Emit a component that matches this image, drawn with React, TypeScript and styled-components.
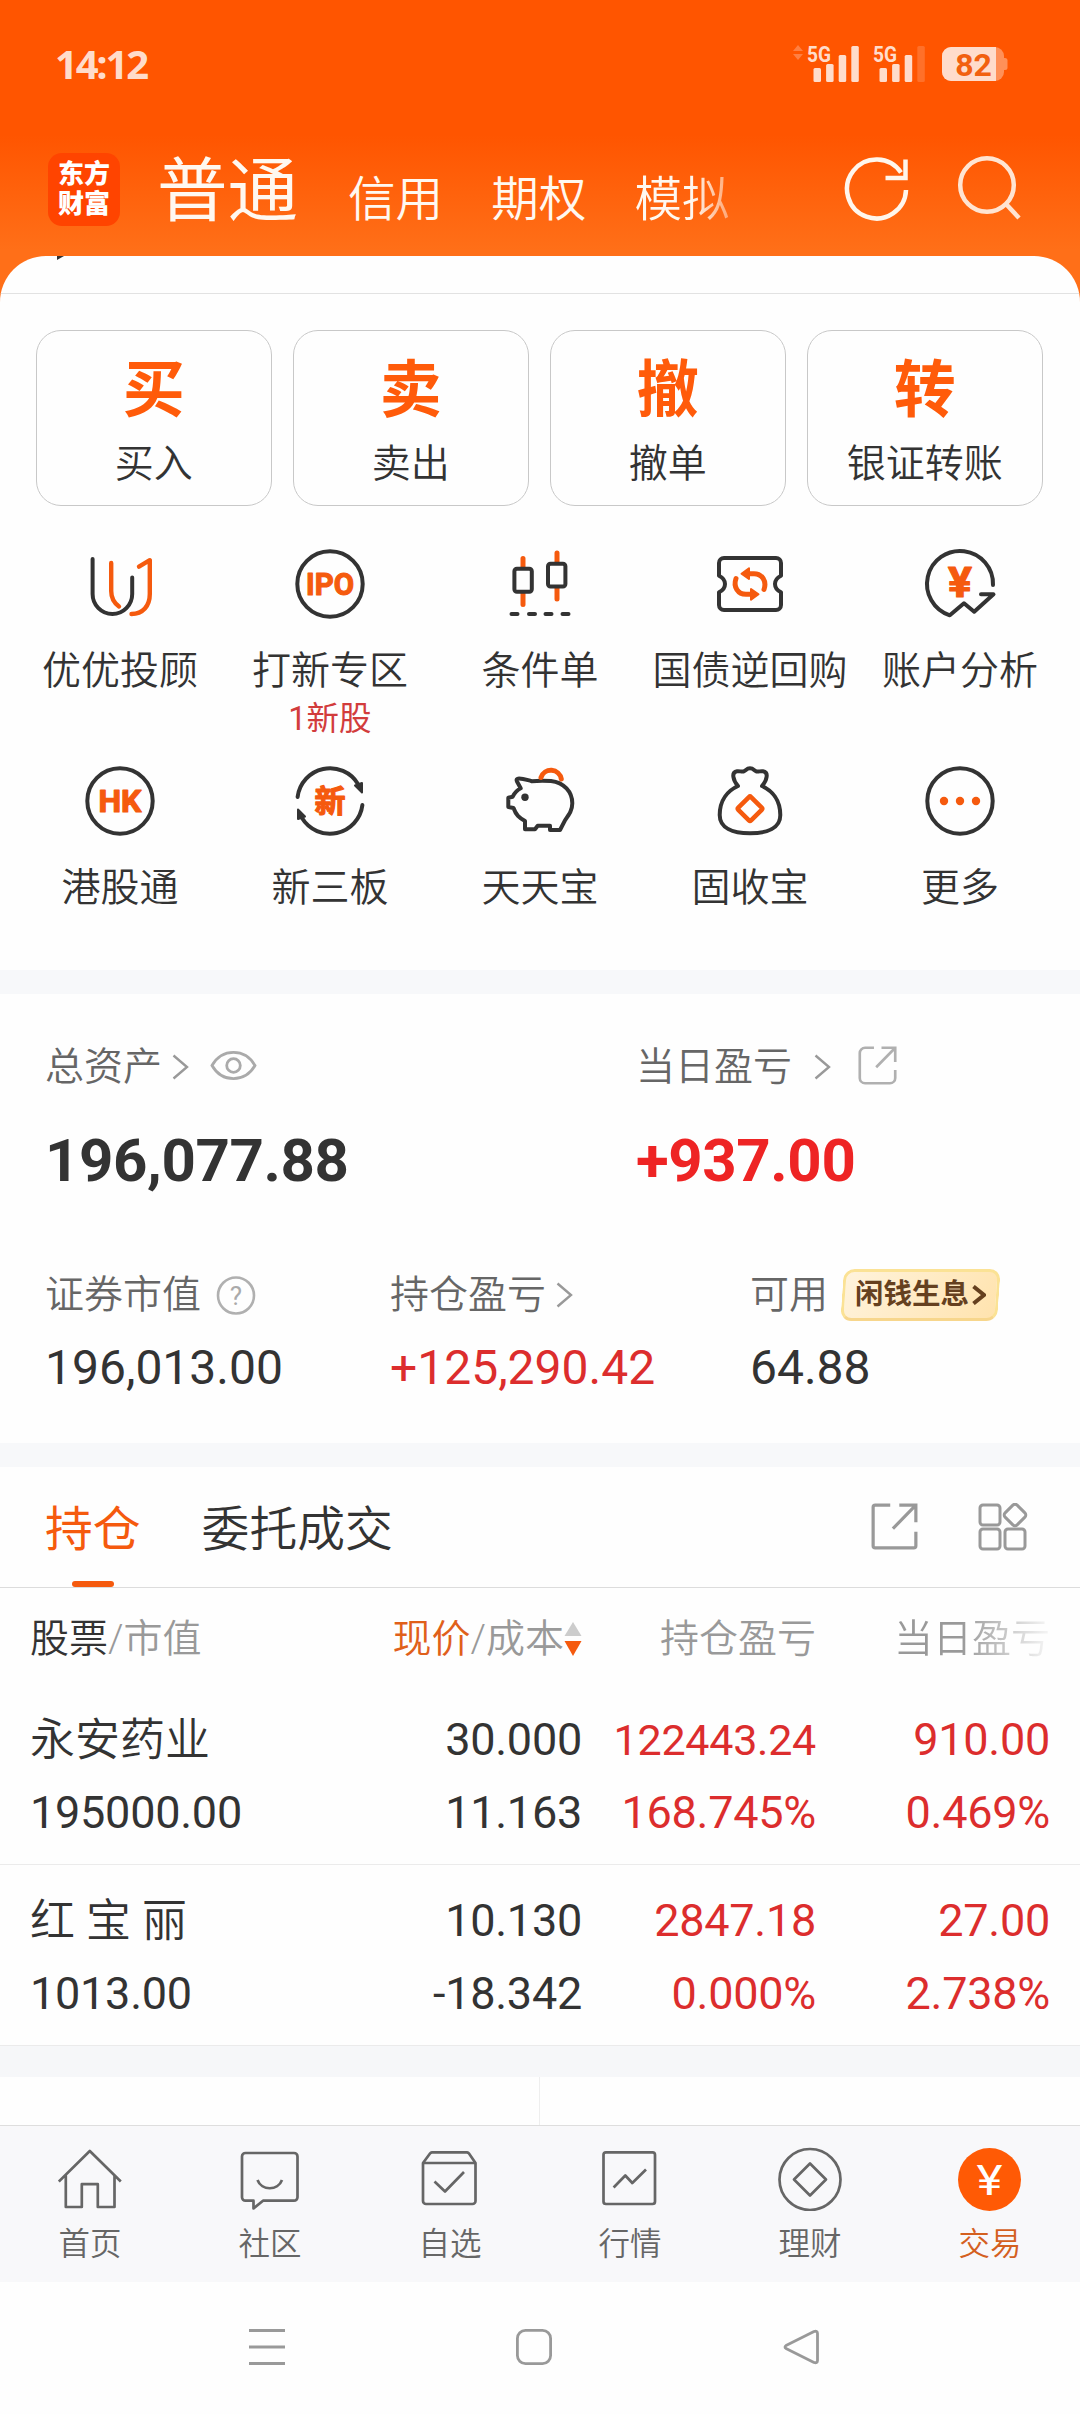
import React from "react";
import styled, { createGlobalStyle } from "styled-components";

const ORANGE = "#f55a0e";
const INK = "#333";
const RED = "#dc2d2d";

const GlobalStyle = createGlobalStyle`
  * { box-sizing: border-box; }
  body {
    margin: 0;
    background: #fff;
    font-family: Roboto, "Noto Sans CJK SC", sans-serif;
    font-weight: 350;
    color: ${INK};
  }
  svg { display: block; flex: none; }
`;

const Screen = styled.div`
  width: 1080px;
  height: 2414px;
  display: flex;
  flex-direction: column;
  overflow: hidden;
  background: #fefefe;
`;

/* ---------- Header ---------- */

const Header = styled.header`
  flex: none;
  height: 306px;
  margin-bottom: -50px;
  background: linear-gradient(#ff5500 0, #ff5500 135px, #ff6f18 250px, #ff6f18 100%);
`;

const StatusBar = styled.div`
  height: 128px;
  padding: 0 72px 0 55px;
  display: flex;
  justify-content: space-between;
  align-items: center;
`;

const Clock = styled.span`
  font: 700 40px/44px "Open Sans", Roboto, sans-serif;
  letter-spacing: -2.2px;
  color: #ffdccb;
`;

const NavRow = styled.div`
  height: 122px;
  padding: 0 57px 0 48px;
  display: flex;
  align-items: center;
`;

const Logo = styled.div`
  width: 72px;
  height: 73px;
  border-radius: 14px;
  background: #ff4400;
  color: #fff;
  display: grid;
  place-content: center;
  font-size: 26px;
  font-weight: 900;
  line-height: 30px;
  text-align: center;
`;

const ModeTabs = styled.nav`
  display: flex;
  align-items: baseline;
  gap: 48px;
  margin-left: 37px;
  padding-top: 14px;
  flex: 1;
  color: #fff8f0;
  line-height: 80px;
`;

const ModeTab = styled.span<{ $active?: boolean; $fade?: boolean }>`
  font-size: ${(p) => (p.$active ? 70.5 : 47.6)}px;
  margin-right: ${(p) => (p.$active ? 2 : 0)}px;
  font-weight: ${(p) => (p.$active ? 400 : 350)};
  ${(p) =>
    p.$fade &&
    "background: linear-gradient(90deg, #fff8f0 60%, #ffa470 100%); background-clip: text; color: transparent;"}
`;

const HeaderActions = styled.div`
  display: flex;
  align-items: center;
  gap: 47px;
`;

/* ---------- Sheet ---------- */

const Sheet = styled.section`
  flex: none;
  height: 714px;
  border-radius: 46px 46px 0 0;
  background: #fefefe;
  overflow: hidden;
`;

const ClippedRow = styled.div`
  height: 38px;
  padding-left: 57px;
  border-bottom: 1.5px solid #e2e2e2;
`;

const Actions = styled.div`
  display: grid;
  grid-template-columns: repeat(4, 235.5px);
  gap: 21.5px;
  padding: 36px 36px 0;
`;

const ActionCard = styled.button`
  all: unset;
  box-sizing: border-box;
  height: 176px;
  border: 1px solid #c8c8c8;
  border-radius: 25px;
  display: flex;
  flex-direction: column;
  align-items: center;
`;

const ActionGlyph = styled.span`
  margin-top: 25px;
  font-size: 62px;
  font-weight: 700;
  line-height: 70px;
  color: #ff5b0a;
`;

const ActionLabel = styled.span`
  margin-top: 14px;
  font-size: 39px;
  line-height: 48px;
`;

const Features = styled.div`
  display: grid;
  grid-template-columns: repeat(5, 210px);
  grid-auto-rows: 217px;
  padding: 36px 15px 0;
`;

const Feature = styled.div`
  display: flex;
  flex-direction: column;
  align-items: center;
  white-space: nowrap;
`;

const FeatureLabel = styled.span`
  margin-top: 21px;
  font-size: 39px;
  line-height: 48px;
`;

const FeatureNote = styled.span`
  margin-top: 4px;
  font-size: 32.5px;
  font-weight: 400;
  line-height: 40px;
  color: #d23c3c;
`;

const Divider = styled.div`
  flex: none;
  height: 24px;
  background: #f7f8fa;
`;

/* ---------- Assets ---------- */

const Assets = styled.section`
  flex: none;
  height: 449px;
  padding: 48px 45px 0;
`;

const TotalGrid = styled.div`
  display: grid;
  grid-template-columns: 591px 1fr;
`;

const DetailGrid = styled.div`
  display: grid;
  grid-template-columns: 345px 360px 1fr;
  margin-top: 74px;
`;

const LabelLine = styled.div<{ $gap?: number }>`
  height: 50px;
  display: flex;
  align-items: center;
  gap: ${(p) => p.$gap ?? 10}px;
  font-size: 39px;
  line-height: 50px;
  color: #666;
  white-space: nowrap;
`;

const EyeIcon = styled.svg`
  margin-left: 11px;
  margin-top: -3px;
`;

const ShareSlot = styled.span`
  margin: -3px 0 0 5px;
`;

const TotalValue = styled.div<{ $up?: boolean }>`
  margin-top: 34px;
  font-size: 60px;
  font-weight: 700;
  line-height: 70px;
  letter-spacing: -0.4px;
  color: ${(p) => (p.$up ? "#ee2424" : INK)};
`;

const DetailValue = styled.div<{ $up?: boolean }>`
  margin-top: 18px;
  font-size: 48px;
  font-weight: 400;
  line-height: 60px;
  color: ${(p) => (p.$up ? RED : INK)};
`;

const GoldTag = styled.span`
  position: relative;
  z-index: 0;
  width: 157px;
  height: 52px;
  margin-left: 4px;
  display: flex;
  align-items: center;
  justify-content: center;
  gap: 3px;
  font-size: 28.5px;
  font-weight: 700;
  line-height: 52px;
  color: #65401f;
  &::before {
    content: "";
    position: absolute;
    z-index: -1;
    inset: 0;
    transform: skewX(-4deg);
    border: 3px solid #fbe295;
    border-bottom-color: #f7d68c;
    border-radius: 11px;
    background: linear-gradient(120deg, #fff3dc, #ffe3ae);
  }
`;

/* ---------- Holdings ---------- */

const TabRow = styled.div`
  flex: none;
  height: 121px;
  padding: 0 52px 0 45px;
  display: flex;
  gap: 61px;
  border-bottom: 1.5px solid #dcdcdc;
`;

const Tab = styled.div<{ $active?: boolean }>`
  display: flex;
  flex-direction: column;
  align-items: center;
  font-size: 47.8px;
  line-height: 60px;
  padding-top: 33px;
  font-weight: ${(p) => (p.$active ? 400 : 350)};
  color: ${(p) => (p.$active ? ORANGE : INK)};
  &::after {
    content: "";
    width: 42px;
    height: 6px;
    margin-top: 21px;
    border-radius: 3px;
    background: ${(p) => (p.$active ? ORANGE : "transparent")};
  }
`;

const TabTools = styled.div`
  margin-left: auto;
  display: flex;
  gap: 60px;
  padding-top: 36px;
`;

const tableColumns = `
  display: grid;
  grid-template-columns: 282px 270px 234px 234px;
  padding: 0 30px 0 30px;
`;

const TableHead = styled.div`
  ${tableColumns}
  flex: none;
  height: 96px;
  align-items: center;
  padding-top: 5px;
  font-size: 39px;
  line-height: 50px;
  color: #999;
  white-space: nowrap;
`;

const HeadCell = styled.span<{ $end?: boolean; $fade?: boolean }>`
  display: flex;
  align-items: center;
  justify-content: ${(p) => (p.$end ? "flex-end" : "flex-start")};
  ${(p) =>
    p.$fade &&
    "background: linear-gradient(90deg, #999 62%, #f2f2f2 98%); background-clip: text; color: transparent;"}
`;

const Em = styled.span<{ $color: string }>`
  color: ${(p) => p.$color};
`;

const Row = styled.div`
  ${tableColumns}
  flex: none;
  height: 181px;
  padding-top: 23px;
  align-content: start;
  border-bottom: 1.5px solid #ebebeb;
  grid-auto-rows: 73px;
  font-size: 45px;
  line-height: 66px;
  letter-spacing: -0.25px;
  white-space: nowrap;
`;

const Cell = styled.span<{ $up?: boolean; $end?: boolean; $name?: boolean; $tight?: boolean }>`
  text-align: ${(p) => (p.$end ? "right" : "left")};
  color: ${(p) => (p.$up ? RED : INK)};
  font-weight: ${(p) => (p.$name ? 350 : 400)};
  ${(p) => p.$name && "padding-top: 1px; letter-spacing: 0;"}
  ${(p) => p.$tight && "font-size: 43px;"}
`;

const MoreGap = styled.div`
  flex: none;
  height: 31px;
  background: #f6f7f9;
`;

const SplitRow = styled.div`
  flex: none;
  height: 49px;
  display: grid;
  grid-template-columns: 1fr 1fr;
  border-bottom: 1.5px solid #dedede;
`;

const SplitCell = styled.div`
  border-right: 1px solid #eee;
`;

/* ---------- Bottom bars ---------- */

const TabBar = styled.nav`
  flex: none;
  height: 156px;
  display: grid;
  grid-template-columns: repeat(6, 1fr);
  background: #f8f8fa;
`;

const TabBarItem = styled.div<{ $active?: boolean }>`
  display: flex;
  flex-direction: column;
  align-items: center;
  padding-top: 21px;
  font-size: 31.5px;
  line-height: 40px;
  gap: 14px;
  color: ${(p) => (p.$active ? "#d4601f" : "#666")};
`;

const SystemNav = styled.div`
  flex: 1;
  display: flex;
  justify-content: space-between;
  align-items: center;
  padding: 0 261px 2px 249px;
`;

/* ---------- Icons ---------- */

const Chevron = ({ color = "#999", w = 17, h = 26, stroke = 2.4 }) => (
  <svg width={w} height={h} viewBox={`0 0 ${w} ${h}`} fill="none" stroke={color} strokeWidth={stroke}>
    <path d={`M1.5 1.5L${w - 2} ${h / 2}L1.5 ${h - 1.5}`} />
  </svg>
);

const FeatureIcon = ({ children }: { children: React.ReactNode }) => (
  <svg width="84" height="84" viewBox="0 0 84 84" fill="none" stroke={INK} strokeWidth="4" strokeLinecap="round" strokeLinejoin="round">
    {children}
  </svg>
);

const BadgeText = ({
  text,
  y,
  size,
  width,
  weight = 700,
}: {
  text: string;
  y: number;
  size: number;
  width: number;
  weight?: number;
}) => (
  <text
    x={42}
    y={y}
    fontSize={size}
    fontWeight={weight}
    textAnchor="middle"
    textLength={width}
    lengthAdjust="spacingAndGlyphs"
    fill={ORANGE}
    stroke={ORANGE}
    strokeWidth="1.2"
  >
    {text}
  </text>
);

const icons = {
  advisor: (
    <FeatureIcon>
      <path d="M14.6 17V52a19.8 20 0 0 0 39.6 0V35.5" />
      <g stroke={ORANGE} strokeWidth="4.4">
        <path d="M33.2 21V49c0 8 3 12 7.8 15.5" />
        <path d="M61 24.7L71.8 18.2V52c0 12-7 20-18.3 20" />
      </g>
    </FeatureIcon>
  ),
  ipo: (
    <FeatureIcon>
      <circle cx="42" cy="42" r="32.7" />
      <BadgeText text="IPO" y={53} size={32} width={48} />
    </FeatureIcon>
  ),
  candles: (
    <FeatureIcon>
      <path stroke={ORANGE} strokeWidth="5" d="M25 16.5v46M59 11v46" />
      <rect x="16.4" y="26.7" width="17.4" height="23" rx="2.5" fill="#fefefe" />
      <rect x="50" y="21.7" width="17.4" height="22.8" rx="2.5" fill="#fefefe" />
      <path d="M13.5 72h6M31 72h6M47.5 72h6M64.5 72h6" />
    </FeatureIcon>
  ),
  bond: (
    <FeatureIcon>
      <path d="M11 33.7V21a5 5 0 0 1 5-5H68a5 5 0 0 1 5 5V33.7c-8 4-8 12.6 0 16.6V63a5 5 0 0 1-5 5H16a5 5 0 0 1-5-5V50.3c8-4 8-12.6 0-16.6z" />
      {[0, 180].map((angle) => (
        <g key={angle} stroke={ORANGE} transform={`rotate(${angle} 42 42)`}>
          <path strokeWidth="5" d="M28 36.5C25 45 30 52.3 38 52.3H43" />
          <path strokeWidth="2" fill={ORANGE} d="M43 47v10.8l7.5-5.5z" />
        </g>
      ))}
    </FeatureIcon>
  ),
  analysis: (
    <FeatureIcon>
      <path d="M75 43A33 33 0 1 0 31.8 73.3L46 61.3l10.2 8.4L75.5 52.3H63" />
      <BadgeText text="¥" y={54.5} size={43} width={24} weight={700} />
    </FeatureIcon>
  ),
  hk: (
    <FeatureIcon>
      <circle cx="42" cy="42" r="32.7" />
      <BadgeText text="HK" y={53} size={31} width={43} />
    </FeatureIcon>
  ),
  newBoard: (
    <FeatureIcon>
      {[0, 180].map((angle) => (
        <g key={angle} transform={`rotate(${angle} 42 42)`}>
          <path d="M9.6 38A32.7 32.7 0 0 1 70 25" />
          <path fill={INK} strokeWidth="2" d="M67 26.5L74 24V33.500z" />
        </g>
      ))}
      <BadgeText text="新" y={53} size={31} width={31} />
    </FeatureIcon>
  ),
  piggy: (
    <FeatureIcon>
      <path d="M22.7 29.3L19 22.5c-1-2 0-3 2-3 5 0 8 1.5 12.7 2.7C40 21.5 47 21.5 53 22c13 1.5 21.3 11 21.3 22.3 0 7-3 11-7.3 17L62 71H52V66.7H39.7L37 70.3H27V62c-6-3.5-9-6-11.5-13l-5.2-1V38.7l4.4-1c2-4 4-6.4 8-8.4z" />
      <circle cx="27" cy="38.3" r="3.7" fill={INK} stroke="none" />
      <path stroke={ORANGE} strokeWidth="5" d="M43 18.5a10.5 10.5 0 0 1 20.3 1.5" />
    </FeatureIcon>
  ),
  bag: (
    <FeatureIcon>
      <path d="M30 27C20 31.5 11.7 41 11.7 56c0 13 13 18.3 30.3 18.3S72.3 69 72.3 56C72.3 41 64 31.5 54 27c5-6 7-14 1-14.8-3-.4-4 .8-6.5.3C46.5 12 45.5 9.3 42 9.3S37.5 12 35.5 12.5c-2.5.5-3.5-.7-6.5-.3-6 .8-4 8.8 1 14.8z" />
      <rect x="33" y="40.7" width="18" height="18" rx="1.5" transform="rotate(45 42 49.7)" stroke={ORANGE} strokeWidth="4.6" />
    </FeatureIcon>
  ),
  more: (
    <FeatureIcon>
      <circle cx="42" cy="42" r="32.7" />
      <g fill={ORANGE} stroke="none">
        <circle cx="26" cy="42" r="4.2" />
        <circle cx="42" cy="42" r="4.2" />
        <circle cx="58" cy="42" r="4.2" />
      </g>
    </FeatureIcon>
  ),
};

const BarIcon = ({ children }: { children: React.ReactNode }) => (
  <svg width="64" height="64" viewBox="0 0 64 64" fill="none" stroke="#666" strokeWidth="2.7" strokeLinejoin="round">
    {children}
  </svg>
);

const barIcons = {
  home: (
    <BarIcon>
      <path d="M.8 34.5L31.8 4l31 30.5M7.8 28.5V60H23.8V37.2H39.8V60H56.5V28.5" />
    </BarIcon>
  ),
  community: (
    <BarIcon>
      <path d="M25 53.7H56a3.5 3.5 0 0 0 3.5-3.5V9.5A3.5 3.5 0 0 0 56 6H7.500A3.5 3.5 0 0 0 4 9.5V50.2a3.5 3.5 0 0 0 3.5 3.5h8V61.5z" />
      <path d="M19.5 33c4 11 20.5 11 24.5 0" />
    </BarIcon>
  ),
  favorite: (
    <BarIcon>
      <path d="M5 16V54a3 3 0 0 0 3 3H54.5a3 3 0 0 0 3-3V16L51 6.5a3 3 0 0 0-2-1.2H14a3 3 0 0 0-2 1.2z" />
      <path d="M5 16H57.5M16.5 34.5L27 44.5 46 25" />
    </BarIcon>
  ),
  market: (
    <BarIcon>
      <rect x="5.5" y="5.3" width="51.5" height="51.7" rx="2.5" />
      <path d="M15.6 40.5L27.3 28.5l7 7.5L48 22.5" />
    </BarIcon>
  ),
  wealth: (
    <BarIcon>
      <circle cx="32" cy="32.5" r="30.5" />
      <path d="M32 16.5l16 16-16 16-16-16z" />
    </BarIcon>
  ),
  trade: (
    <BarIcon>
      <circle cx="31.5" cy="32.5" r="31.5" fill="#ff5a05" stroke="none" />
      <text x="31.5" y="48" fontSize="42" fontWeight="400" textAnchor="middle" textLength="26" lengthAdjust="spacingAndGlyphs" fill="#fff" stroke="none">
        ¥
      </text>
    </BarIcon>
  ),
};

const ShareIcon = ({ size, color, radius }: { size: number; color: string; radius: number }) => (
  <svg width={size} height={size} viewBox="0 0 44 44" fill="none" stroke={color} strokeWidth="3">
    <path
      d={`M18 2H${2 + radius}a${radius} ${radius} 0 0 0-${radius} ${radius}V${42 - radius}a${radius} ${radius} 0 0 0 ${radius} ${radius}H${42 - radius}a${radius} ${radius} 0 0 0 ${radius}-${radius}V27`}
    />
    <path d="M26.5 2H42V18M41.5 2.5L20.5 24" />
  </svg>
);

const GridIcon = () => (
  <svg width="50" height="48" viewBox="0 0 50 48" fill="none" stroke="#999" strokeWidth="3">
    <rect x="2" y="2" width="20" height="20" rx="3" />
    <rect x="2" y="26" width="20" height="20" rx="3" />
    <rect x="27" y="26" width="20" height="20" rx="3" />
    <rect x="28.5" y="3.5" width="17" height="17" rx="3" transform="rotate(45 37 12)" />
  </svg>
);

const Signal = ({ bars }: { bars: number }) => (
  <svg width="54" height="54" viewBox="-2 -8 54 54" fill="#ffdccb">
    <text x="-1" y="16.5" fontSize="22" fontWeight="700" textLength="24" lengthAdjust="spacingAndGlyphs">
      5G
    </text>
    {[14, 18, 27, 36].map((h, i) => (
      <rect key={h} x={5.5 + i * 12.6} y={37 - h} width="7.5" height={h} rx="1.5" opacity={i < bars ? 1 : 0.2} />
    ))}
  </svg>
);

const StatusIcons = styled.div`
  display: flex;
  align-items: center;
  gap: 12px;
`;

const LinkArrows = styled.svg`
  margin-right: -9px;
  margin-bottom: 22px;
`;

const Battery = styled.svg`
  margin-left: 3px;
`;

/* ---------- Data ---------- */

const actions = [
  ["买", "买入"],
  ["卖", "卖出"],
  ["撤", "撤单"],
  ["转", "银证转账"],
];

const features: { icon: keyof typeof icons; label: string; note?: string }[] = [
  { icon: "advisor", label: "优优投顾" },
  { icon: "ipo", label: "打新专区", note: "1新股" },
  { icon: "candles", label: "条件单" },
  { icon: "bond", label: "国债逆回购" },
  { icon: "analysis", label: "账户分析" },
  { icon: "hk", label: "港股通" },
  { icon: "newBoard", label: "新三板" },
  { icon: "piggy", label: "天天宝" },
  { icon: "bag", label: "固收宝" },
  { icon: "more", label: "更多" },
];

const holdings = [
  { name: "永安药业", value: "195000.00", price: "30.000", cost: "11.163", pnl: "122443.24", pnlPct: "168.745%", day: "910.00", dayPct: "0.469%" },
  { name: "红 宝 丽", value: "1013.00", price: "10.130", cost: "-18.342", pnl: "2847.18", pnlPct: "0.000%", day: "27.00", dayPct: "2.738%" },
];

const barItems: { icon: keyof typeof barIcons; label: string; active?: boolean }[] = [
  { icon: "home", label: "首页" },
  { icon: "community", label: "社区" },
  { icon: "favorite", label: "自选" },
  { icon: "market", label: "行情" },
  { icon: "wealth", label: "理财" },
  { icon: "trade", label: "交易", active: true },
];

export default function App() {
  return (
    <>
      <GlobalStyle />
      <Screen>
        <Header>
          <StatusBar>
            <Clock>14:12</Clock>
            <StatusIcons>
              <LinkArrows width="10" height="16" viewBox="0 0 10 16" fill="#ff7f42">
                <path d="M0 6L5 0l5 6zM0 9h10l-5 6z" />
              </LinkArrows>
              <Signal bars={4} />
              <Signal bars={3} />
              <Battery width="67" height="36" viewBox="0 0 67 36">
                <rect x="1" y="1" width="62" height="34" rx="9" fill="#ff9058" />
                <path d="M63 12h1a2.5 2.5 0 0 1 2.5 2.5v7A2.5 2.5 0 0 1 64 24h-1z" fill="#ff9058" />
                <path d="M55 1H10a9 9 0 0 0-9 9v16a9 9 0 0 0 9 9H55z" fill="#ffdccb" />
                <text x="32.5" y="29.5" fontSize="32" fontWeight="700" textAnchor="middle" fill="#f2600f">
                  82
                </text>
              </Battery>
            </StatusIcons>
          </StatusBar>
          <NavRow>
            <Logo>
              东方
              <br />
              财富
            </Logo>
            <ModeTabs>
              <ModeTab $active>普通</ModeTab>
              <ModeTab>信用</ModeTab>
              <ModeTab>期权</ModeTab>
              <ModeTab $fade>模拟</ModeTab>
            </ModeTabs>
            <HeaderActions>
              <svg width="66" height="66" viewBox="0 0 66 66" fill="none" stroke="#fff6ec" strokeWidth="4.5">
                <path d="M62 34A29.5 29.5 0 1 1 57 16.5M61.5 3.5V22H41.5" />
              </svg>
              <svg width="66" height="70" viewBox="0 0 66 70" fill="none" stroke="#ffe4d2" strokeWidth="4.5">
                <circle cx="30" cy="31" r="26.8" />
                <path d="M49 50L62 64" />
              </svg>
            </HeaderActions>
          </NavRow>
        </Header>

        <Sheet>
          <ClippedRow>
            <svg width="7" height="4" viewBox="0 0 7 4" fill={INK}>
              <path d="M0 0h7L0 4z" />
            </svg>
          </ClippedRow>
          <Actions>
            {actions.map(([glyph, label]) => (
              <ActionCard key={glyph}>
                <ActionGlyph>{glyph}</ActionGlyph>
                <ActionLabel>{label}</ActionLabel>
              </ActionCard>
            ))}
          </Actions>
          <Features>
            {features.map((f) => (
              <Feature key={f.label}>
                {icons[f.icon]}
                <FeatureLabel>{f.label}</FeatureLabel>
                {f.note && <FeatureNote>{f.note}</FeatureNote>}
              </Feature>
            ))}
          </Features>
        </Sheet>
        <Divider />

        <Assets>
          <TotalGrid>
            <div>
              <LabelLine>
                总资产
                <Chevron />
                <EyeIcon width="47" height="32" viewBox="0 0 47 32" fill="none" stroke="#aaa" strokeWidth="2.8">
                  <path d="M2 15.5C12-2 35-2 45 15.5 35 33 12 33 2 15.5z" />
                  <circle cx="23.5" cy="15.5" r="6.8" />
                </EyeIcon>
              </LabelLine>
              <TotalValue>196,077.88</TotalValue>
            </div>
            <div>
              <LabelLine $gap={22}>
                当日盈亏
                <Chevron />
                <ShareSlot>
                  <ShareIcon size={39} color="#b0b0b0" radius={6} />
                </ShareSlot>
              </LabelLine>
              <TotalValue $up>+937.00</TotalValue>
            </div>
          </TotalGrid>
          <DetailGrid>
            <div>
              <LabelLine $gap={15}>
                证券市值
                <svg width="40" height="40" viewBox="0 0 40 40" fill="none" stroke="#b0b0b0" strokeWidth="2.6">
                  <circle cx="20" cy="20.5" r="18" />
                  <text x="20" y="30" fontSize="26" fontWeight="400" textAnchor="middle" fill="#aaa" stroke="none">
                    ?
                  </text>
                </svg>
              </LabelLine>
              <DetailValue>196,013.00</DetailValue>
            </div>
            <div>
              <LabelLine>
                持仓盈亏
                <Chevron />
              </LabelLine>
              <DetailValue $up>+125,290.42</DetailValue>
            </div>
            <div>
              <LabelLine>
                可用
                <GoldTag>
                  闲钱生息
                  <Chevron color="#65401f" w={14} h={20} stroke={4} />
                </GoldTag>
              </LabelLine>
              <DetailValue>64.88</DetailValue>
            </div>
          </DetailGrid>
        </Assets>
        <Divider />

        <TabRow>
          <Tab $active>持仓</Tab>
          <Tab>委托成交</Tab>
          <TabTools>
            <ShareIcon size={47} color="#999" radius={2} />
            <GridIcon />
          </TabTools>
        </TabRow>
        <TableHead>
          <HeadCell>
            <Em $color={INK}>股票</Em>/市值
          </HeadCell>
          <HeadCell $end>
            <Em $color="#e0601a">现价</Em>/成本
            <svg width="18" height="36" viewBox="0 0 18 36">
              <path d="M9 1l8.5 14H.5z" fill="#ccc" />
              <path d="M.5 20h17L9 35z" fill={ORANGE} />
            </svg>
          </HeadCell>
          <HeadCell $end>持仓盈亏</HeadCell>
          <HeadCell $end $fade>
            当日盈亏
          </HeadCell>
        </TableHead>
        {holdings.map((h) => (
          <Row key={h.name}>
            <Cell $name>{h.name}</Cell>
            <Cell $end>{h.price}</Cell>
            <Cell $end $up $tight={h.pnl.length > 8}>
              {h.pnl}
            </Cell>
            <Cell $end $up>{h.day}</Cell>
            <Cell>{h.value}</Cell>
            <Cell $end>{h.cost}</Cell>
            <Cell $end $up>{h.pnlPct}</Cell>
            <Cell $end $up>{h.dayPct}</Cell>
          </Row>
        ))}
        <MoreGap />
        <SplitRow>
          <SplitCell />
          <div />
        </SplitRow>

        <TabBar>
          {barItems.map((b) => (
            <TabBarItem key={b.label} $active={b.active}>
              {barIcons[b.icon]}
              {b.label}
            </TabBarItem>
          ))}
        </TabBar>
        <SystemNav>
          <svg width="36" height="36" viewBox="0 0 36 36" stroke="#999" strokeWidth="3">
            <path d="M0 1.5h36M0 18h36M0 34.5h36" />
          </svg>
          <svg width="36" height="36" viewBox="0 0 36 36" fill="none" stroke="#999" strokeWidth="2.8">
            <rect x="1.4" y="1.4" width="33.2" height="33.2" rx="8" />
          </svg>
          <svg width="36" height="36" viewBox="0 0 36 36" fill="none" stroke="#999" strokeWidth="2.8" strokeLinejoin="round">
            <path d="M31 2.5L3 16.5q-2 1.5 0 3L31 33.5q3.5 1 3.5-2v-27q0-3-3.5-2z" />
          </svg>
        </SystemNav>
      </Screen>
    </>
  );
}
